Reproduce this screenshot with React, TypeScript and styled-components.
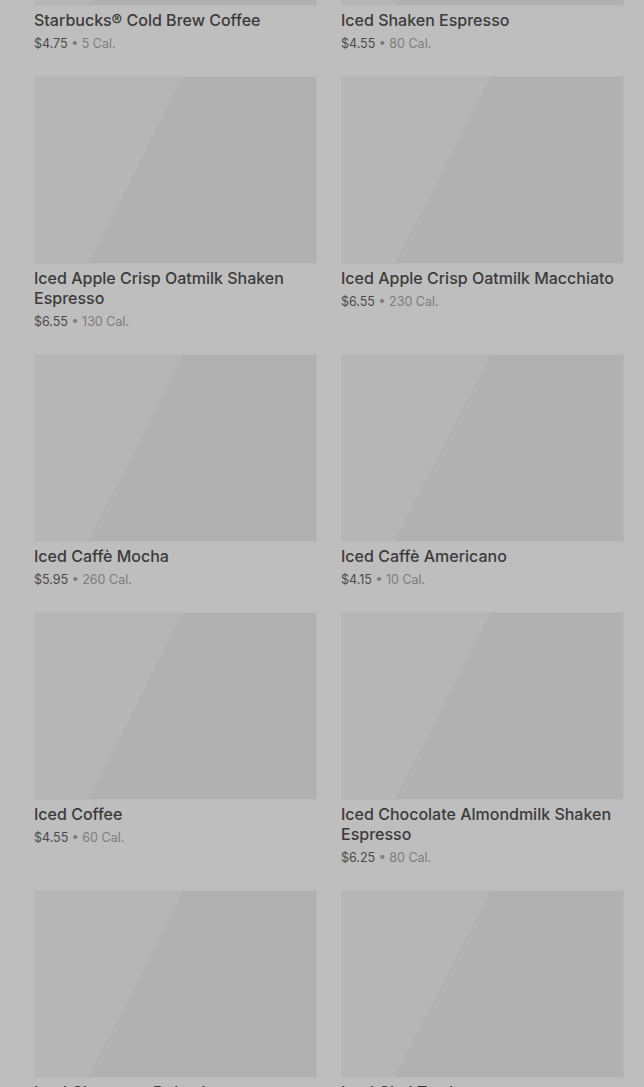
import React from "react";
import styled, { createGlobalStyle } from "styled-components";

const Global = createGlobalStyle`
  html, body { margin: 0; padding: 0; background: #bebebe; overflow: hidden; }
  body { font-family: Inter, Roboto, "Liberation Sans", Arial, sans-serif; }
`;

const Page = styled.div`
  height: 1087px;
  overflow: hidden;
  background: #bebebe;
`;

const Grid = styled.div`
  display: grid;
  grid-template-columns: 283px 283px;
  column-gap: 24px;
  row-gap: 22px;
  align-items: start;
  padding: 0 20px 0 34px;
  margin-top: -182px;
`;

const Card = styled.div`
  display: flex;
  flex-direction: column;
`;

const Thumb = styled.div`
  height: 188px;
  border-radius: 2px;
  background: linear-gradient(
    117deg,
    #b6b6b6 0%,
    #b6b6b6 39.3%,
    #b1b1b1 39.6%,
    #b1b1b1 100%
  );
  box-shadow: inset 0 0 0 1px #b8b8b8;
`;

const Title = styled.div`
  margin-top: 4px;
  font-size: 16px;
  line-height: 20px;
  font-weight: 500;
  color: #3b3b3b;
  letter-spacing: 0;
`;

const Meta = styled.div`
  margin-top: 4px;
  font-size: 12.5px;
  line-height: 20px;
  color: #4a4a4a;
`;

const Cal = styled.span`
  color: #7c7c7c;
`;

const items = [
  { name: "Starbucks® Cold Brew Coffee", price: "$4.75", cal: "5 Cal." },
  { name: "Iced Shaken Espresso", price: "$4.55", cal: "80 Cal." },
  { name: "Iced Apple Crisp Oatmilk Shaken Espresso", price: "$6.55", cal: "130 Cal." },
  { name: "Iced Apple Crisp Oatmilk Macchiato", price: "$6.55", cal: "230 Cal." },
  { name: "Iced Caffè Mocha", price: "$5.95", cal: "260 Cal." },
  { name: "Iced Caffè Americano", price: "$4.15", cal: "10 Cal." },
  { name: "Iced Coffee", price: "$4.55", cal: "60 Cal." },
  { name: "Iced Chocolate Almondmilk Shaken Espresso", price: "$6.25", cal: "80 Cal." },
  { name: "Iced Cinnamon Dolce Latte", price: "$5.45", cal: "200 Cal." },
  { name: "Iced Chai Tea Latte", price: "$5.25", cal: "240 Cal." },
];

export default function App() {
  return (
    <Page>
      <Global />
      <Grid>
        {items.map((it) => (
          <Card key={it.name}>
            <Thumb />
            <Title>{it.name}</Title>
            <Meta>
              {it.price} <Cal>• {it.cal}</Cal>
            </Meta>
          </Card>
        ))}
      </Grid>
    </Page>
  );
}
